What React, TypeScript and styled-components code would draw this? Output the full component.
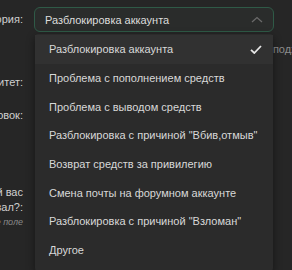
import React from "react";
import styled, { createGlobalStyle } from "styled-components";

const GlobalStyle = createGlobalStyle`
  html, body {
    margin: 0;
    padding: 0;
    background: #262626;
    overflow: hidden;
  }
  body {
    font-family: "Liberation Sans", Arial, sans-serif;
    color: #d6d6d6;
  }
`;

const options = [
  "Разблокировка аккаунта",
  "Проблема с пополнением средств",
  "Проблема с выводом средств",
  "Разблокировка с причиной \"Вбив,отмыв\"",
  "Возврат средств за привилегию",
  "Смена почты на форумном аккаунте",
  "Разблокировка с причиной \"Взломан\"",
  "Другое",
];

function App() {
  return (
    <>
      <GlobalStyle />
      <Frame>
        <Form>
          <Row>
            <Label>Категория:</Label>
            <Field>
              <SelectBox>
                <SelectText>{options[0]}</SelectText>
                <Chevron width="12" height="7" viewBox="0 0 12 7">
                  <path d="M1 6 L6 1.5 L11 6" fill="none" stroke="#6a6a6a" strokeWidth="1.3" />
                </Chevron>
              </SelectBox>
              <Hint>Выберите подходящую категорию</Hint>
              <Menu>
                {options.map((o, i) => (
                  <Item key={o} $active={i === 0}>
                    {o}
                    {i === 0 && (
                      <Check width="12" height="9" viewBox="0 0 12 9">
                        <path d="M1 4.8 L4.3 8 L11 1" fill="none" stroke="#e6e6e6" strokeWidth="1.8" />
                      </Check>
                    )}
                  </Item>
                ))}
              </Menu>
            </Field>
          </Row>
          <Row $top={13}>
            <Label>Приоритет:</Label>
            <Field />
          </Row>
          <Row $top={13}>
            <Label>Заголовок:</Label>
            <Field />
          </Row>
          <Row $top={57}>
            <Label>
              Какой сервер, который вас
              <br />
              интересовал?:
              <Note>Обязательное поле</Note>
            </Label>
            <Field />
          </Row>
        </Form>
      </Frame>
    </>
  );
}

export default App;

const Frame = styled.div`
  width: 292px;
  height: 270px;
  overflow: hidden;
  position: relative;
`;

const Form = styled.div`
  width: 429px;
  margin-left: -137px;
  padding-top: 7px;
  box-sizing: border-box;
`;

const Row = styled.div<{ $top?: number }>`
  display: grid;
  grid-template-columns: 160px 240px;
  column-gap: 11px;
  align-items: start;
  margin-top: ${({ $top }) => $top ?? 0}px;
`;

const Label = styled.div`
  text-align: right;
  font-size: 11px;
  line-height: 15px;
  padding-top: 5px;
  color: #d0d0d0;
  white-space: nowrap;
`;

const Note = styled.div`
  font-size: 9px;
  font-style: italic;
  color: #8a8a8a;
  line-height: 14px;
`;

const Field = styled.div`
  position: relative;
`;

const SelectBox = styled.div`
  height: 25px;
  box-sizing: border-box;
  border: 1px solid #2f5a47;
  border-radius: 6px;
  background: #2a2c2b;
  display: flex;
  align-items: center;
  padding: 0 10px 0 10px;
  justify-content: space-between;
`;

const SelectText = styled.span`
  font-size: 11px;
  color: #dcdcdc;
`;

const Chevron = styled.svg`
  display: block;
`;

const Hint = styled.div`
  font-size: 11px;
  line-height: 15px;
  color: #8c8c8c;
  padding: 10px 0 0 185px;
  white-space: nowrap;
`;

const Menu = styled.div`
  position: absolute;
  left: 1px;
  top: 27px;
  width: 238px;
  background: #2b2b2b;
  border-radius: 3px;
  box-shadow: 0 3px 8px rgba(0, 0, 0, 0.45);
  padding: 1px 0 6px;
`;

const Item = styled.div<{ $active?: boolean }>`
  height: 28.7px;
  display: flex;
  align-items: center;
  justify-content: space-between;
  padding: 0 11px 0 14px;
  font-size: 11px;
  color: #d8d8d8;
  background: ${({ $active }) => ($active ? "#313131" : "transparent")};
  white-space: nowrap;
`;

const Check = styled.svg`
  display: block;
`;
